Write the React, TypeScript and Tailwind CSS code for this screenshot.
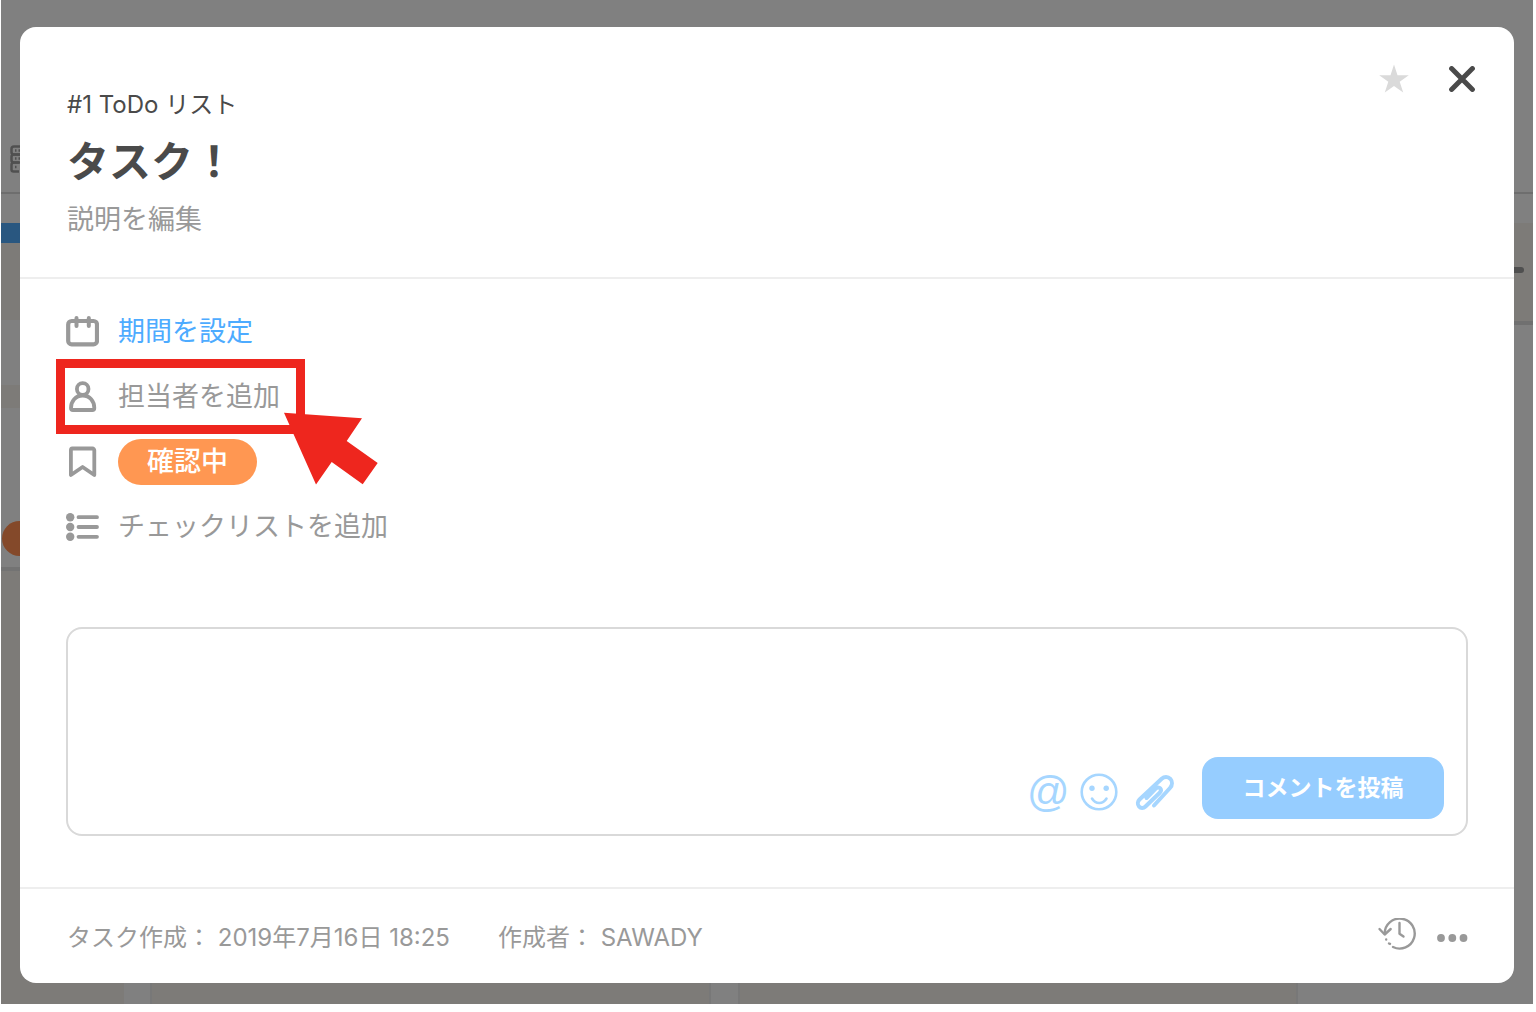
import type { ReactNode } from "react";

function Board() {
  return (
    <div aria-hidden="true" className="flex min-w-0 flex-col overflow-hidden bg-[#808080] [grid-area:1/1]">
      <div className="flex h-[194px] shrink-0 items-end border-b-2 border-[#6e6e6e] pb-[19px] pl-[9px]">
        <svg className="h-7 w-7" viewBox="0 0 28 28" fill="none" stroke="#505050" strokeWidth="2.500">
          <rect x="1.5" y="1.5" width="24" height="8" rx="2.5" />
          <rect x="1.5" y="9.5" width="24" height="8" rx="2.5" />
          <path d="M9 17.500H4a2.500 2.500 0 0 0-2.500 2.500v4.500a2 2 0 0 0 2 2H9" />
          <path d="M5 5.500h1.500M8.500 5.500H10M5 13.500h1.500M8.500 13.500H10M5 22h1.500" />
        </svg>
      </div>
      <div className="flex flex-1 pt-[29px]">
        <div className="flex w-[123px] shrink-0 flex-col bg-[#7d7b78]">
          <div className="h-5 bg-[#295780]" />
          <div className="mt-[77px] h-[65px] bg-[#808080]" />
          <div className="mt-[23px] flex h-[163px] items-end border-b-4 border-[#737373] bg-[#808080] pb-[11px] pl-px">
            <div className="h-[35px] w-[90px] rounded-full bg-[#84492a]" />
          </div>
        </div>
        <div className="ml-[26px] flex-[560] border-x-2 border-[#787878] bg-[#7d7b78]" />
        <div className="ml-[27px] flex-[560] border-x-2 border-[#787878] bg-[#7d7b78]" />
        <div className="ml-[27px] flex h-[102px] flex-[200] items-center justify-end border-b-4 border-[#707070] bg-[#7d7b78] pr-[9px]">
          <div className="mb-1 h-[6px] w-6 rounded-full bg-[#4f4f4f]" />
        </div>
      </div>
    </div>
  );
}

function CalendarIcon() {
  return (
    <svg className="h-[31px] w-[33px]" viewBox="0 0 33 31" fill="none" stroke="currentColor">
      <rect x="2.200" y="5" width="28.800" height="23.400" rx="3.500" strokeWidth="4.200" />
      <path d="M10.500 2v8M22.800 2v8" strokeWidth="4" strokeLinecap="round" />
    </svg>
  );
}

function UserIcon() {
  return (
    <svg className="h-8 w-[33px]" viewBox="0 0 33 32" fill="none" stroke="currentColor" strokeWidth="3.800">
      <circle cx="16.700" cy="8" r="5.800" />
      <path d="M5 27c0-6.500 4.500-12.500 11.700-12.500s11.600 6 11.600 12.500c0 1.300-.7 2-2 2H7c-1.300 0-2-.7-2-2z" />
    </svg>
  );
}

function BookmarkIcon() {
  return (
    <svg className="h-8 w-[33px]" viewBox="0 0 33 32" fill="none" stroke="currentColor" strokeWidth="3.800" strokeLinejoin="round">
      <path d="M6.500 2.500h20a1.800 1.800 0 0 1 1.800 1.800v24.700L16.600 21 4.900 29V4.300a1.800 1.800 0 0 1 1.600-1.800z" />
    </svg>
  );
}

function ListIcon() {
  return (
    <svg className="h-7 w-[33px]" viewBox="0 0 33 28" fill="currentColor">
      <circle cx="4.200" cy="4.200" r="4.200" />
      <circle cx="4.200" cy="14" r="4.200" />
      <circle cx="4.200" cy="23.800" r="4.200" />
      <path d="M12.500 4.200h18.500M12.500 14h18.500M12.500 23.800h18.500" stroke="currentColor" strokeWidth="3.800" strokeLinecap="round" />
    </svg>
  );
}

function Row({ icon, children }: { icon: ReactNode; children: ReactNode }) {
  return (
    <li className="relative flex h-[65px] items-center gap-[19px]">
      {icon}
      {children}
    </li>
  );
}

export default function App() {
  return (
    <main className="min-h-screen bg-white pr-[3px] pb-2 pl-px font-['Inter','Noto_Sans_CJK_JP',sans-serif] text-[27px] leading-10 text-[#999]">
      <div className="grid min-h-[calc(100vh-8px)]">
        <Board />
        <section
          role="dialog"
          aria-labelledby="task-title"
          className="relative mx-[19px] mt-[27px] mb-[21px] flex min-w-0 flex-col rounded-2xl bg-white [grid-area:1/1]"
        >
          <header className="flex items-start justify-between border-b-2 border-[#eee] pt-9 pr-[39px] pb-[37px] pl-[47px]">
            <div className="flex flex-col items-start pt-[26px]">
              <p className="text-[24px] leading-8 text-[#4a4a4a]">#1 ToDo リスト</p>
              <h1 id="task-title" className="mt-[11px] text-[42px] leading-[60px] font-bold text-[#4a4a4a]">
                タスク！
              </h1>
              <button type="button" className="mt-2">
                説明を編集
              </button>
            </div>
            <div className="flex items-center gap-[39px]">
              <button type="button" aria-label="お気に入り">
                <svg className="size-8" viewBox="0 0 32 32" fill="#dadada">
                  <path d="M16 1.500l3.500 10.700h11.300l-9.100 6.600 3.500 10.700-9.200-6.600-9.200 6.600 3.500-10.700-9.100-6.600h11.300z" />
                </svg>
              </button>
              <button type="button" aria-label="閉じる">
                <svg className="size-[26px]" viewBox="0 0 26 26" fill="none" stroke="#4a4a4a" strokeWidth="5" strokeLinecap="round">
                  <path d="M2.600 2.600l20.800 20.800M23.400 2.600L2.600 23.400" />
                </svg>
              </button>
            </div>
          </header>

          <div className="flex-1 px-[46px] pt-5 pb-[51px]">
            <ul>
              <Row icon={<CalendarIcon />}>
                <button type="button" className="text-[#4dabff]">
                  期間を設定
                </button>
              </Row>
              <Row icon={<UserIcon />}>
                <button type="button">担当者を追加</button>
                <div className="pointer-events-none absolute -top-[5px] -left-[10px] h-[75px] w-[249px] border-[9px] border-[#ee261e]">
                  <svg className="absolute top-11 left-[219px] h-[73px] w-[94px]" viewBox="0 0 94 73" fill="#ee261e">
                    <path d="M0 .7L78 6.300 62.700 29l31 22-15 21.300-31-22.300L32 72.500z" />
                  </svg>
                </div>
              </Row>
              <Row icon={<BookmarkIcon />}>
                <button type="button" className="h-[46px] rounded-full bg-[#ff9752] px-[29px] font-medium text-white">
                  確認中
                </button>
              </Row>
              <Row icon={<ListIcon />}>
                <button type="button">チェックリストを追加</button>
              </Row>
            </ul>

            <form className="mt-[68px] rounded-2xl border-2 border-[#d9d9d9] pb-[15px]" onSubmit={(e) => e.preventDefault()}>
              <textarea aria-label="コメント" className="block h-32 w-full resize-none px-5 pt-4 text-[#4a4a4a] outline-none" />
              <div className="flex items-center justify-end pr-[22px] text-[#a6d6ff]">
                <button type="button" aria-label="メンション" className="mt-2 font-['Liberation_Sans',sans-serif] text-[42px] italic">
                  @
                </button>
                <button type="button" aria-label="絵文字" className="mt-2 ml-[11px]">
                  <svg className="size-[38px]" viewBox="0 0 38 38" fill="none" stroke="currentColor" strokeWidth="2.600" strokeLinecap="round">
                    <circle cx="19" cy="19" r="17.300" />
                    <path d="M12 25.500c1.800 3 4.200 4.500 7.200 4.500s5.500-1.500 7.300-4.500" />
                    <circle cx="12" cy="15.300" r="2.700" fill="currentColor" stroke="none" />
                    <circle cx="26.200" cy="15.300" r="2.700" fill="currentColor" stroke="none" />
                  </svg>
                </button>
                <button type="button" aria-label="ファイルを添付" className="mt-2 ml-[17px]">
                  <svg className="size-[39px]" viewBox="0 0 39 39" fill="none" stroke="currentColor" strokeWidth="4" strokeLinecap="round" strokeLinejoin="round">
                    <path d="M19 32.500L35 15c2.700-3 2.400-6.800.3-9.200-2.300-2.500-6-2.500-8.600 0L4.500 26.500c-2 2-2.200 5-.5 7s4.500 2 6.500 0L24.500 20c1.500-1.500 1.700-3.500.7-4.700s-3-1.200-4.500.2L11.500 25" />
                  </svg>
                </button>
                <button type="submit" className="ml-[28px] h-[62px] w-[242px] rounded-2xl bg-[#96cdff] text-[23px] font-bold text-white">
                  コメントを投稿
                </button>
              </div>
            </form>
          </div>

          <footer className="flex items-center justify-between border-t-2 border-[#eee] pt-[29px] pr-[46px] pb-[25px] pl-[47px] text-[24px]">
            <p className="flex flex-wrap gap-x-12">
              <span>タスク作成： 2019年7月16日 18:25</span>
              <span>作成者： SAWADY</span>
            </p>
            <div className="flex items-center gap-5">
              <button type="button" aria-label="履歴" className="pb-2">
                <svg className="h-8 w-10" viewBox="0 0 40 32" fill="none" stroke="currentColor" strokeWidth="2.400" strokeLinecap="round">
                  <path d="M7.700 15.500A15 15 0 1 1 16 29" />
                  <path d="M2.500 11l5.200 5.500 6-5.500M22.500 5v10.800l4 2.800" strokeLinejoin="round" />
                  <path d="M9.200 21.500v.1M12 25.500l1 .4" />
                </svg>
              </button>
              <button type="button" aria-label="その他">
                <svg className="h-2 w-[31px]" viewBox="0 0 31 8" fill="currentColor">
                  <circle cx="4" cy="4" r="3.900" />
                  <circle cx="15.300" cy="4" r="3.900" />
                  <circle cx="26.500" cy="4" r="3.900" />
                </svg>
              </button>
            </div>
          </footer>
        </section>
      </div>
    </main>
  );
}
